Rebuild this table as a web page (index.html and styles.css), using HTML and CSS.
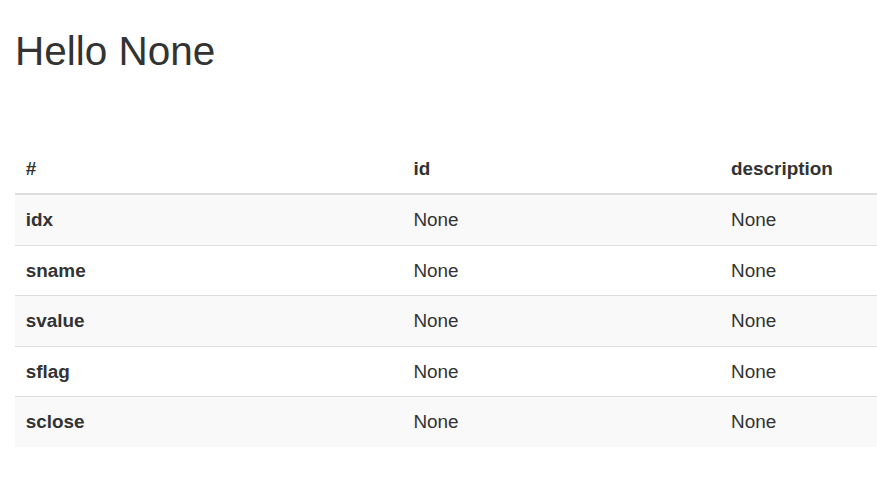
FILE: index.html
```html
<!DOCTYPE html>
<html>
<head>
<meta charset="utf-8">
<title>Hello None</title>
<link rel="stylesheet" href="styles.css">
</head>
<body>
<div class="page">
  <h2 class="title">Hello None</h2>
  <table class="data-table">
    <thead>
      <tr><th class="c1">#</th><th class="c2">id</th><th class="c3">description</th></tr>
    </thead>
    <tbody>
      <tr><th>idx</th><td>None</td><td>None</td></tr>
      <tr><th>sname</th><td>None</td><td>None</td></tr>
      <tr><th>svalue</th><td>None</td><td>None</td></tr>
      <tr><th>sflag</th><td>None</td><td>None</td></tr>
      <tr><th>sclose</th><td>None</td><td>None</td></tr>
    </tbody>
  </table>
</div>
</body>
</html>
```
FILE: styles.css
```css
html, body {
  margin: 0;
  padding: 0;
  background: #fff;
}
body {
  font-family: "Liberation Sans", Arial, Helvetica, sans-serif;
  font-size: 18.9px;
  line-height: 27px;
  color: #333;
  overflow: hidden;
}
.page {
  padding-left: 15px;
}
.title {
  margin: 29px 0 0 0;
  font-size: 40.5px;
  font-weight: 500;
  line-height: 44.5px;
  color: #333;
}
.data-table {
  margin-top: 70px;
  width: 862px;
  border-collapse: collapse;
  border-spacing: 0;
}
.data-table th,
.data-table td {
  padding: 11.25px 10.8px;
  text-align: left;
  vertical-align: top;
  line-height: 27px;
}
.data-table th {
  font-weight: bold;
}
.data-table thead th {
  border-bottom: 2px solid #ddd;
  vertical-align: bottom;
}
.data-table tbody th,
.data-table tbody td {
  border-top: 1px solid #ddd;
}
.data-table tbody tr:nth-child(odd) {
  background: #f9f9f9;
}
.c1 { width: 366px; }
.c2 { width: 296px; }
.c3 { width: auto; }
```
